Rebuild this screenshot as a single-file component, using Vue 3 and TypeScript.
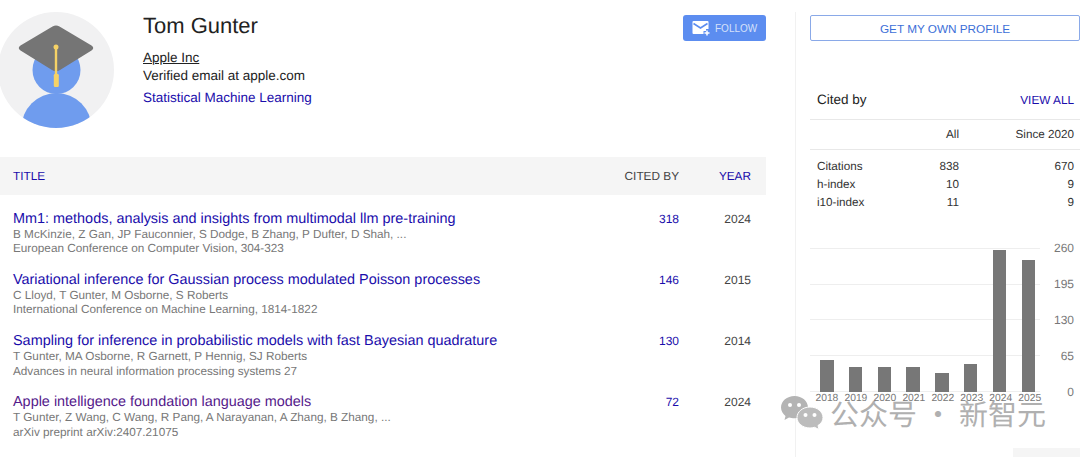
<script setup lang="ts">
const papers = [
  { title: 'Mm1: methods, analysis and insights from multimodal llm pre-training', authors: 'B McKinzie, Z Gan, JP Fauconnier, S Dodge, B Zhang, P Dufter, D Shah, ...', venue: 'European Conference on Computer Vision, 304-323', cited: 318, year: 2024, visited: false },
  { title: 'Variational inference for Gaussian process modulated Poisson processes', authors: 'C Lloyd, T Gunter, M Osborne, S Roberts', venue: 'International Conference on Machine Learning, 1814-1822', cited: 146, year: 2015, visited: false },
  { title: 'Sampling for inference in probabilistic models with fast Bayesian quadrature', authors: 'T Gunter, MA Osborne, R Garnett, P Hennig, SJ Roberts', venue: 'Advances in neural information processing systems 27', cited: 130, year: 2014, visited: false },
  { title: 'Apple intelligence foundation language models', authors: 'T Gunter, Z Wang, C Wang, R Pang, A Narayanan, A Zhang, B Zhang, ...', venue: 'arXiv preprint arXiv:2407.21075', cited: 72, year: 2024, visited: true },
]
const stats = [
  { name: 'Citations', all: 838, since: 670 },
  { name: 'h-index', all: 10, since: 9 },
  { name: 'i10-index', all: 11, since: 9 },
]
const bars = [
  { year: 2018, h: 32 },
  { year: 2019, h: 25 },
  { year: 2020, h: 25 },
  { year: 2021, h: 25 },
  { year: 2022, h: 19 },
  { year: 2023, h: 28 },
  { year: 2024, h: 142 },
  { year: 2025, h: 132 },
]
const ticks = [260, 195, 130, 65, 0]
</script>

<template>
  <div class="page">
    <main class="main">
      <header class="profile">
        <svg class="avatar" width="116" height="116" viewBox="0 0 116 116">
          <defs>
            <clipPath id="av"><circle cx="58" cy="58" r="58" /></clipPath>
          </defs>
          <g clip-path="url(#av)">
            <rect width="116" height="116" fill="#f1f1f2" />
            <circle cx="58.500" cy="58" r="24" fill="#6f9cee" />
            <ellipse cx="58.500" cy="116" rx="35" ry="35" fill="#6f9cee" />
            <path d="M54.500 14.500 Q58 12.500 61.500 14.500 L93.500 33.500 Q97 36 93.500 38.500 L62 58 Q58 60.500 54 58 L22.500 38.500 Q19 36 22.500 33.500 Z" fill="#757575" />
            <rect x="56.800" y="35" width="2.400" height="28" fill="#f6d266" />
            <circle cx="58" cy="35" r="2.500" fill="#f6d266" />
            <rect x="55.800" y="62" width="5" height="13" rx="1.200" fill="#f6d266" />
          </g>
        </svg>
        <div class="identity">
          <h1 class="name">Tom Gunter</h1>
          <div class="org">Apple Inc</div>
          <div class="email">Verified email at apple.com</div>
          <div class="topic">Statistical Machine Learning</div>
        </div>
        <button class="follow">
          <svg width="18" height="15" viewBox="0 0 18 15">
            <path d="M1.500 0H15.500Q16.500 0 16.500 1V8H14V10H11.500V13H1.500Q0.500 13 0.500 12V1Q0.500 0 1.500 0Z" fill="#fff" />
            <path d="M1.500 2.500L8.500 7L15.500 2.500" fill="none" stroke="#5c8df0" stroke-width="1.600" />
            <path d="M15 9.500V14.500M12.500 12H17.500" stroke="#fff" stroke-width="1.500" />
          </svg>
          <span>FOLLOW</span>
        </button>
      </header>

      <div class="thead">
        <span class="th-title">TITLE</span>
        <span class="th-cited">CITED BY</span>
        <span class="th-year">YEAR</span>
      </div>

      <div class="rows">
        <article v-for="p in papers" :key="p.title" class="row">
          <div class="info">
            <div class="title" :class="{ visited: p.visited }">{{ p.title }}</div>
            <div class="meta">{{ p.authors }}</div>
            <div class="meta">{{ p.venue }}</div>
          </div>
          <div class="cited">{{ p.cited }}</div>
          <div class="year">{{ p.year }}</div>
        </article>
      </div>
    </main>

    <aside class="side">
      <button class="own">GET MY OWN PROFILE</button>
      <div class="cited-head">
        <span class="cited-label">Cited by</span>
        <span class="view-all">VIEW ALL</span>
      </div>
      <div class="stat-head">
        <span class="s-name"></span>
        <span class="s-all">All</span>
        <span class="s-since">Since 2020</span>
      </div>
      <div class="stats">
        <div v-for="s in stats" :key="s.name" class="stat">
          <span class="s-name">{{ s.name }}</span>
          <span class="s-all">{{ s.all }}</span>
          <span class="s-since">{{ s.since }}</span>
        </div>
      </div>
      <div class="chart">
        <div class="plot">
          <div class="grid">
            <i v-for="t in ticks" :key="t"></i>
          </div>
          <div class="bars">
            <div v-for="b in bars" :key="b.year" class="bar" :style="{ height: b.h + 'px' }"></div>
          </div>
          <div class="years">
            <span v-for="b in bars" :key="b.year">{{ b.year }}</span>
          </div>
        </div>
        <div class="ticks">
          <span v-for="t in ticks" :key="t">{{ t }}</span>
        </div>
      </div>
    </aside>

    <div class="watermark">
      <svg width="43" height="34" viewBox="0 0 43 34">
        <path d="M13.500 0C6 0 0 5 0 11.500C0 15 2 18 4.500 20L3.500 24L8 21.500C9.500 22 11.500 22.300 13.500 22.300C21 22.300 27 17.500 27 11.500C27 5 21 0 13.500 0Z" fill="#b4b4b4" />
        <path d="M29 11C21.500 11 16 16 16 21.500C16 27 21.500 32 29 32C30.500 32 32 31.800 33.500 31.300L38 33.500L37 29.500C40.500 27.500 42 24.500 42 21.500C42 16 36.500 11 29 11Z" fill="#bcbcbc" stroke="#fff" stroke-width="1" />
        <circle cx="9" cy="9" r="2" fill="#fff" />
        <circle cx="18" cy="9" r="2" fill="#fff" />
        <circle cx="24.500" cy="19" r="2" fill="#fff" />
        <circle cx="33.500" cy="19" r="2" fill="#fff" />
      </svg>
      <span>公众号 · 新智元</span>
    </div>
    <div class="corner"></div>
  </div>
</template>

<style>
html, body { margin: 0; background: #fff; overflow: hidden; }
</style>

<style scoped>
.page {
  position: relative;
  display: flex;
  width: 1080px;
  height: 457px;
  overflow: hidden;
  font-family: "Liberation Sans", Arial, sans-serif;
  color: #222;
  background: #fff;
  text-rendering: geometricPrecision;
}
.main { width: 766px; flex: none; }
.profile {
  display: flex;
  align-items: flex-start;
  height: 157px;
  box-sizing: border-box;
  padding-top: 12px;
}
.avatar { margin-left: -2px; flex: none; }
.identity { margin-left: 29px; flex: 1; }
.name {
  margin: 0;
  font-size: 22px;
  font-weight: 400;
  line-height: 28px;
}
.org {
  margin-top: 8.500px;
  font-size: 13.500px;
  line-height: 18px;
  text-decoration: underline;
}
.email { font-size: 13.500px; line-height: 17.500px; }
.topic { margin-top: 5px; font-size: 13.500px; line-height: 18px; color: #1a0dab; }
.follow {
  display: flex;
  align-items: center;
  gap: 5px;
  width: 83px;
  height: 26px;
  margin-top: 3px;
  padding: 0 0 0 9px;
  border: 0;
  border-radius: 3px;
  background: #5c8df0;
  color: #d5e1fa;
  font: 10px "Liberation Sans", Arial, sans-serif;
  box-sizing: border-box;
}
.thead {
  display: flex;
  align-items: center;
  height: 38px;
  background: #f5f5f5;
  font-size: 11.800px;
  padding: 0 15px 0 13px;
}
.th-title { flex: 1; color: #1a0dab; }
.th-cited { color: #444; width: 72px; text-align: right; }
.th-year { color: #1a0dab; width: 72px; text-align: right; }
.rows { padding-top: 14.500px; }
.row {
  display: flex;
  height: 61.300px;
  padding: 0 15px 0 13px;
}
.info { flex: 1; min-width: 0; }
.title { font-size: 14.430px; line-height: 18px; color: #1a0dab; }
.title.visited { color: #551a8b; }
.meta { font-size: 11.750px; line-height: 14.500px; color: #777; }
.cited {
  width: 40px;
  text-align: right;
  font-size: 12px;
  line-height: 19px;
  color: #1a0dab;
}
.year {
  width: 72px;
  text-align: right;
  font-size: 12px;
  line-height: 19px;
  color: #444;
}
.side {
  margin-left: 29px;
  margin-top: 12px;
  width: 285px;
  flex: none;
  box-sizing: border-box;
  border-left: 1px solid #f1f1f1;
  padding: 3px 0 0 14px;
}
.own {
  display: block;
  width: 270px;
  height: 26px;
  box-sizing: border-box;
  margin: 0;
  border: 1px solid #8aa9e8;
  border-radius: 2px;
  background: #fff;
  color: #3c6fd8;
  font: 11.750px "Liberation Sans", Arial, sans-serif;
}
.cited-head {
  display: flex;
  justify-content: space-between;
  align-items: center;
  height: 39px;
  margin-top: 39px;
  padding: 0 6px 0 7px;
  border-bottom: 1px solid #e8e8e8;
}
.cited-label { font-size: 13.500px; }
.view-all { font-size: 11.800px; color: #1a0dab; }
.stat-head, .stat {
  display: flex;
  font-size: 11.700px;
  padding: 0 6px 0 7px;
  color: #333;
}
.stat-head {
  height: 29px;
  align-items: center;
  border-bottom: 1px solid #e8e8e8;
}
.stats { padding-top: 7px; }
.stat { height: 18.300px; align-items: center; }
.s-name { flex: 1; }
.s-all { width: 40px; text-align: right; }
.s-since { width: 115px; text-align: right; }
.chart {
  display: flex;
  margin-top: 36px;
  height: 160px;
}
.plot { position: relative; width: 230px; height: 144px; }
.grid {
  position: absolute;
  inset: 0;
  display: flex;
  flex-direction: column;
  justify-content: space-between;
}
.grid i { display: block; height: 1px; background: #eeeeee; }
.bars {
  position: absolute;
  inset: 0 0 0 10px;
  display: flex;
  align-items: flex-end;
  gap: 15.300px;
}
.bar { width: 13.500px; background: #777; flex: none; }
.years {
  position: absolute;
  top: 144px;
  left: 4.500px;
  display: flex;
  gap: 4.200px;
  font-size: 10.300px;
  line-height: 14px;
  color: #777;
}
.years span { width: 24.800px; text-align: center; }
.ticks {
  display: flex;
  flex-direction: column;
  justify-content: space-between;
  align-items: flex-end;
  width: 34px;
  height: 158px;
  margin-top: -7px;
  font-size: 12px;
  line-height: 14px;
  color: #777;
}
.watermark {
  position: absolute;
  left: 781px;
  top: 395px;
  display: flex;
  align-items: center;
  gap: 6px;
  color: #b0b0b0;
  font-family: "Noto Sans CJK SC", sans-serif;
  font-size: 29px;
  line-height: 36px;
  white-space: nowrap;
}
.corner {
  position: absolute;
  right: 0;
  bottom: 0;
  width: 67px;
  height: 9px;
  background: #f5f5f5;
}
</style>
